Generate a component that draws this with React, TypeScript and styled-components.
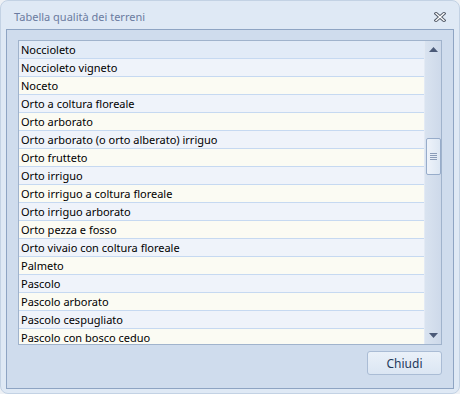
import React from "react";
import styled, { createGlobalStyle } from "styled-components";

const GlobalStyle = createGlobalStyle`
  html, body { margin: 0; padding: 0; background: #eef1f5; }
  * { box-sizing: border-box; }
`;

const Window = styled.div`
  width: 460px;
  height: 394px;
  border-radius: 8px;
  background: #dfe9f5;
  border: 1px solid #c3d2e4;
  display: flex;
  flex-direction: column;
  font-family: "Noto Sans", "Open Sans", sans-serif;
  overflow: hidden;
`;

const TitleBar = styled.div`
  height: 28px;
  display: flex;
  align-items: center;
  padding: 0 13px 0 13px;
  flex-shrink: 0;
`;

const Title = styled.div`
  flex: 1;
  font-size: 11px;
  color: #6b7ba0;
  padding-top: 2px;
`;

const CloseBtn = styled.div`
  width: 12px;
  height: 10px;
  display: flex;
  margin-top: 4px;
`;

const Panel = styled.div`
  flex: 1;
  margin: 0 5px 5px 5px;
  border: 1px solid #8ea4c3;
  background: #cfdced;
  padding: 10px 11px 13px 11px;
  display: flex;
  flex-direction: column;
`;

const List = styled.div`
  height: 305px;
  border: 1px solid #a0b3cc;
  display: flex;
  overflow: hidden;
  flex-shrink: 0;
`;

const Rows = styled.div`
  flex: 1;
  overflow: hidden;
  display: flex;
  flex-direction: column;
`;

const Row = styled.div<{ $kind: "sel" | "blue" | "cream" }>`
  height: 18px;
  flex-shrink: 0;
  border-bottom: 1px solid #c6d9f1;
  background: ${(p) =>
    p.$kind === "sel" ? "#e2ebf7" : p.$kind === "blue" ? "#eff3fa" : "#fbfbf3"};
  font-size: 11px;
  line-height: 17px;
  color: #000;
  padding-left: 2px;
  white-space: nowrap;
`;

const Scrollbar = styled.div`
  width: 17px;
  flex-shrink: 0;
  background: linear-gradient(to right, #d9e3f0, #d2ddec 60%, #cdd9ea);
  display: flex;
  flex-direction: column;
  align-items: center;
  border-left: 1px solid #e3eaf4;
`;

const Arrow = styled.div`
  height: 17px;
  width: 100%;
  display: flex;
  align-items: center;
  justify-content: center;
  flex-shrink: 0;
`;

const Track = styled.div`
  flex: 1;
  width: 100%;
  padding-top: 80px;
  display: flex;
  justify-content: center;
`;

const Thumb = styled.div`
  width: 15px;
  height: 37px;
  border: 1px solid #97acca;
  border-radius: 2px;
  background: linear-gradient(to right, #eef3fa, #dde7f3);
  display: flex;
  flex-direction: column;
  align-items: center;
  justify-content: center;
  gap: 1px;
`;

const Grip = styled.div`
  width: 7px;
  height: 1px;
  background: #8a9cb8;
`;

const Footer = styled.div`
  margin-top: 6px;
  display: flex;
  justify-content: flex-end;
`;

const Button = styled.button`
  width: 75px;
  height: 24px;
  border: 1px solid #aabcd5;
  border-radius: 3px;
  background: linear-gradient(to bottom, #eaf1f9, #dbe6f3);
  color: #1e395b;
  font-family: "Noto Sans", "Open Sans", sans-serif;
  font-size: 12px;
  padding: 0;
`;

const items = [
  "Noccioleto",
  "Noccioleto vigneto",
  "Noceto",
  "Orto a coltura floreale",
  "Orto arborato",
  "Orto arborato (o orto alberato) irriguo",
  "Orto frutteto",
  "Orto irriguo",
  "Orto irriguo a coltura floreale",
  "Orto irriguo arborato",
  "Orto pezza e fosso",
  "Orto vivaio con coltura floreale",
  "Palmeto",
  "Pascolo",
  "Pascolo arborato",
  "Pascolo cespugliato",
  "Pascolo con bosco ceduo",
];

export default function App() {
  return (
    <>
      <GlobalStyle />
      <Window>
        <TitleBar>
          <Title>Tabella qualità dei terreni</Title>
          <CloseBtn>
            <svg width="12" height="10" viewBox="0 0 12 10">
              <path d="M2 1.5 L10 8.5 M10 1.5 L2 8.5" stroke="#555d6b" strokeWidth="3.2" strokeLinecap="square" />
              <path d="M2 1.5 L10 8.5 M10 1.5 L2 8.5" stroke="#ffffff" strokeWidth="1.3" strokeLinecap="square" />
            </svg>
          </CloseBtn>
        </TitleBar>
        <Panel>
          <List>
            <Rows>
              {items.map((t, i) => (
                <Row key={t} $kind={i === 0 ? "sel" : i % 2 === 1 ? "blue" : "cream"}>
                  {t}
                </Row>
              ))}
            </Rows>
            <Scrollbar>
              <Arrow>
                <svg width="9" height="5" viewBox="0 0 9 5">
                  <path d="M0 5 L4.5 0 L9 5 Z" fill="#4b5a78" />
                </svg>
              </Arrow>
              <Track>
                <Thumb>
                  <Grip />
                  <Grip />
                  <Grip />
                  <Grip />
                </Thumb>
              </Track>
              <Arrow>
                <svg width="9" height="5" viewBox="0 0 9 5">
                  <path d="M0 0 L9 0 L4.5 5 Z" fill="#4b5a78" />
                </svg>
              </Arrow>
            </Scrollbar>
          </List>
          <Footer>
            <Button>Chiudi</Button>
          </Footer>
        </Panel>
      </Window>
    </>
  );
}
